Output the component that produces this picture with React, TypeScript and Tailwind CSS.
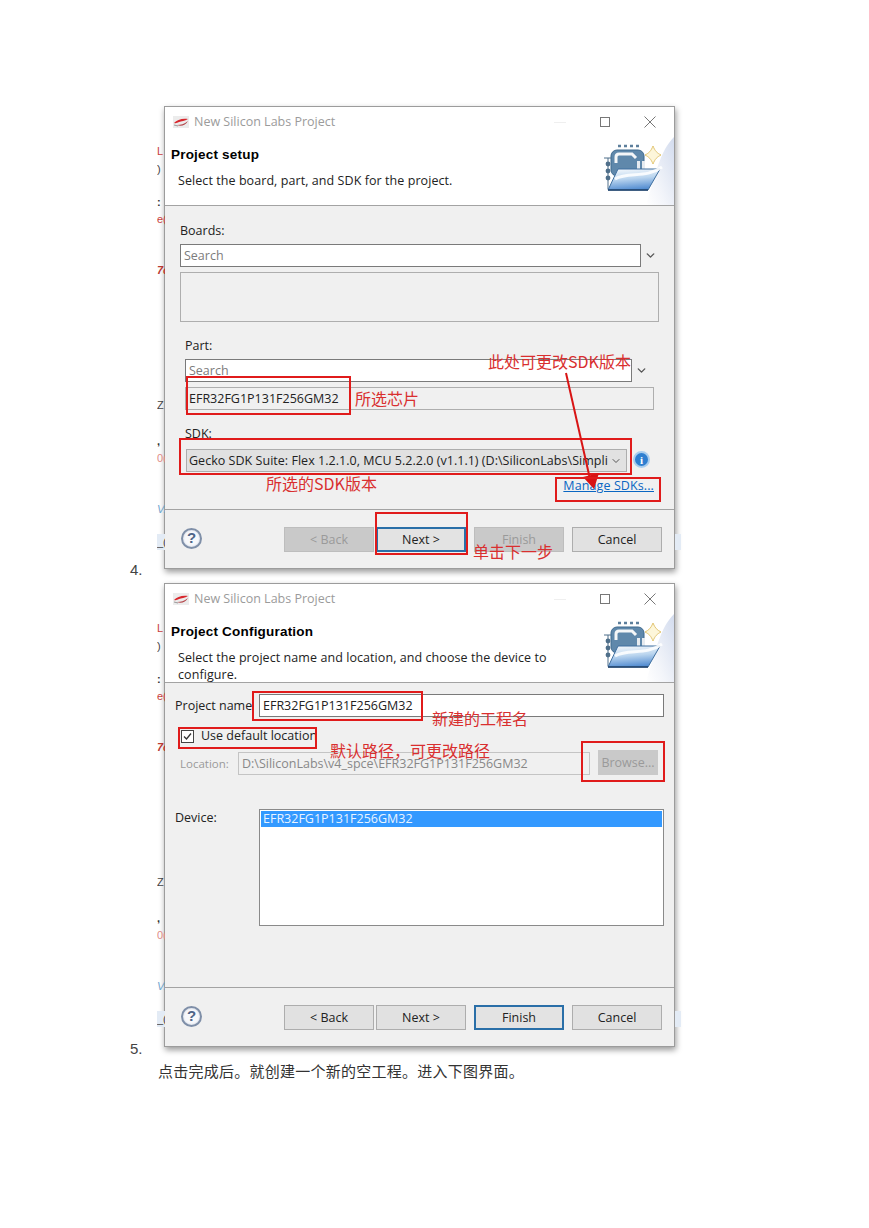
import type { ReactNode } from "react";
import { ChevronDown } from "lucide-react";

const ui = "font-['Open_Sans','Liberation_Sans',sans-serif] text-[12.5px] leading-[16px] text-[#222]";
const cjk = "font-['Noto_Sans_CJK_SC',sans-serif] text-[16px] text-[#d92f2f] leading-[20px] whitespace-nowrap";

function SiliconLogo() {
  return (
    <svg width="16" height="12" viewBox="0 0 16 12" className="shrink-0">
      <rect width="16" height="12" fill="#ececec" />
      <path d="M1 7 C4 4 9 2 15 3 C12 5 8 5 6 6 C4 7 3 7.5 1 7Z" fill="#d8262c" />
      <path d="M4 9 C8 9 11 8 15 5 C13 9 8 11 4 9Z" fill="#b3454a" />
      <path d="M1 9 L5 10" stroke="#9a9a9a" />
    </svg>
  );
}

function WizardArt() {
  return (
    <svg width="76" height="68" viewBox="0 0 76 68" className="absolute right-0 top-0">
      <defs>
        <linearGradient id="corner" x1="0" y1="1" x2="1" y2="0">
          <stop offset="0" stopColor="#ffffff" />
          <stop offset="0.35" stopColor="#f3f5fa" />
          <stop offset="1" stopColor="#d3dcee" />
        </linearGradient>
        <linearGradient id="folder" x1="0.3" y1="0" x2="0.5" y2="1">
          <stop offset="0" stopColor="#f1f6fb" />
          <stop offset="0.45" stopColor="#bcd6ef" />
          <stop offset="1" stopColor="#4f8ad0" />
        </linearGradient>
      </defs>
      <path d="M76 0 C62 14 58 36 48 68 L76 68Z" fill="url(#corner)" />
      <path d="M20 9 h3 M26 9 h3 M32 9 h3 M38 9 h3" stroke="#5d7f9c" strokeWidth="2.5" />
      <rect x="13" y="13" width="33" height="26" rx="6" fill="#5f88ab" stroke="#3f6a8f" />
      <path d="M18 26 V20 Q18 17 21 17 H34 L38 21" fill="none" stroke="#f4f6f8" strokeWidth="3" />
      <rect x="39" y="24" width="3" height="10" fill="#e6ebf0" />
      <rect x="44" y="24" width="3" height="10" fill="#e6ebf0" />
      <path d="M6 21 H13 M10 21 V52" fill="none" stroke="#4f6f8a" />
      <circle cx="10" cy="27" r="2.4" fill="#4f6f8a" />
      <circle cx="10" cy="34" r="2.4" fill="#4f6f8a" />
      <circle cx="10" cy="41" r="2.4" fill="#4f6f8a" />
      <path d="M10 53 L20 32 H62 L50 53Z" fill="url(#folder)" stroke="#3f6f9f" strokeWidth="1" />
      <path d="M10 53 H50" stroke="#1f4068" strokeWidth="1.6" />
      <path d="M17 42 C30 34 48 42 64 30" fill="none" stroke="#ffffff" strokeWidth="3" opacity="0.85" />
      <path d="M55 9 C57 14 59 16 63 18 C59 20 57 22 55 27 C53 22 51 20 47 18 C51 16 53 14 55 9Z" fill="#fdf6da" stroke="#e2c572" />
    </svg>
  );
}

function HelpIcon() {
  return (
    <div className="-mt-[2px] w-[21px] h-[21px] rounded-full border-2 border-[#7f8fa8] bg-[#f7f8fb] flex items-center justify-center font-['Liberation_Sans',sans-serif] font-bold text-[15px] text-[#4d6487] shadow-[inset_0_0_2px_#b8c3d6]">
      ?
    </div>
  );
}

function Btn({ label, state }: { label: string; state?: "off" | "focus" }) {
  const tone =
    state === "off"
      ? "bg-[#c9c9c9] border-[#bdbdbd] text-[#9a9a9a]"
      : state === "focus"
        ? "bg-[#e3e3e3] border-2 border-[#2a6fa8] text-[#222]"
        : "bg-[#e1e1e1] border-[#adadad] text-[#222]";
  return (
    <div className={`w-[90px] h-[25px] pt-[1px] border flex items-center justify-center ${tone}`}>{label}</div>
  );
}

function Scraps() {
  return (
    <div className="absolute left-[-8px] top-0 w-[8px] h-full overflow-hidden font-['Liberation_Sans',sans-serif] text-[11px] leading-[12px]">
      <span className="absolute top-[38px] left-0 text-[#c8403c]">L</span>
      <span className="absolute top-[56px] left-0 text-[#444]">)</span>
      <span className="absolute top-[89px] left-0 font-bold text-[#333]">:</span>
      <span className="absolute top-[106px] left-0 text-[#c8403c] whitespace-nowrap">e(</span>
      <span className="absolute top-[157px] left-0 italic font-bold text-[#b83a34]">7c</span>
      <span className="absolute top-[292px] left-0 text-[#444]">Z</span>
      <span className="absolute top-[328px] left-0 font-bold text-[#333]">,</span>
      <span className="absolute top-[345px] left-0 text-[#e08a86] whitespace-nowrap">0(</span>
      <span className="absolute top-[396px] left-0 italic text-[#6fa5cf]">V/</span>
      <div className="absolute top-[427px] left-0 w-full h-[16px] bg-[#e3ebf5]" />
      <span className="absolute top-[429px] left-0 text-[#444]">_(</span>
    </div>
  );
}

function Dialog({
  title,
  desc,
  bodyH,
  footer,
  children,
}: {
  title: string;
  desc: ReactNode;
  bodyH: string;
  footer: ReactNode;
  children: ReactNode;
}) {
  return (
    <div className={`relative w-[511px] border border-[#9c9c9c] bg-[#f0f0f0] shadow-[1px_3px_6px_rgba(0,0,0,0.4)] ${ui}`}>
      <Scraps />
      <div className="absolute right-[-7px] top-[427px] w-[6px] h-[16px] bg-[#e3ebf5]" />
      <div className="h-[30px] bg-white flex items-center pl-[8px] pr-[18px]">
        <SiliconLogo />
        <span className="ml-[5px] text-[#9b9b9b]">New Silicon Labs Project</span>
        <svg width="12" height="12" viewBox="0 0 12 12" className="ml-auto">
          <path d="M0 6.5 H12" stroke="#efefef" />
        </svg>
        <svg width="10" height="10" viewBox="0 0 10 10" className="ml-[34px]">
          <rect x="0.5" y="0.5" width="9" height="9" fill="none" stroke="#777" />
        </svg>
        <svg width="12" height="12" viewBox="0 0 12 12" className="ml-[34px]">
          <path d="M0.5 0.5 L11.5 11.5 M11.5 0.5 L0.5 11.5" stroke="#777" />
        </svg>
      </div>
      <div className="relative h-[68px] bg-white border-b border-[#a3a3a3] box-content">
        <WizardArt />
        <div className="pl-[6px] pt-[10px] font-['Liberation_Sans',sans-serif] font-bold text-[13.5px] leading-[16px] text-black tracking-[0.2px]">
          {title}
        </div>
        <div className="pl-[13px] pt-[9px] pr-[60px] leading-[17px] tracking-[0.07px]">{desc}</div>
      </div>
      <div className={`${bodyH} relative`}>{children}</div>
      <div className="h-[59px] border-t border-[#a3a3a3] flex items-center pl-[16px] pr-[12px]">
        <HelpIcon />
        <div className="ml-auto flex items-center">{footer}</div>
      </div>
    </div>
  );
}

function Mark({ className }: { className: string }) {
  return <div className={`absolute border-2 border-[#e01b1b] ${className}`} />;
}

function Note({ className, children }: { className: string; children: ReactNode }) {
  return <div className={`absolute ${cjk} ${className}`}>{children}</div>;
}

function SetupBody() {
  return (
    <div className="px-[15px] flex flex-col">
      <div className="mt-[17px]">Boards:</div>
      <div className="mt-[5px] flex items-center">
        <div className="w-[461px] h-[23px] bg-white border border-[#7a7a7a] flex items-center pl-[3px] text-[#7c7c7c]">Search</div>
        <ChevronDown className="ml-[3px] w-[13px] h-[13px] text-[#555]" strokeWidth={2.5} />
      </div>
      <div className="mt-[5px] w-[479px] h-[50px] border border-[#aeaeae]" />
      <div className="mt-[16px] ml-[5px]">Part:</div>
      <div className="mt-[5px] ml-[5px] flex items-center">
        <div className="w-[447px] h-[23px] bg-white border border-[#7a7a7a] flex items-center pl-[3px] text-[#7c7c7c]">Search</div>
        <ChevronDown className="ml-[3px] w-[13px] h-[13px] text-[#555]" strokeWidth={2.5} />
      </div>
      <div className="mt-[5px] ml-[5px] w-[469px] h-[23px] border border-[#aeaeae] flex items-center pl-[3px]">EFR32FG1P131F256GM32</div>
      <div className="mt-[16px] ml-[5px]">SDK:</div>
      <div className="mt-[7px] ml-[6px] flex items-center">
        <div className="w-[441px] h-[23px] bg-[#e1e1e1] border border-[#adadad] flex items-center pl-[2px] pr-[4px] whitespace-nowrap overflow-hidden tracking-[0.03px]">
          <span className="overflow-hidden flex-1">Gecko SDK Suite: Flex 1.2.1.0, MCU 5.2.2.0 (v1.1.1) (D:\SiliconLabs\Simpli</span>
          <ChevronDown className="ml-[2px] shrink-0 w-[12px] h-[12px] text-[#555]" />
        </div>
        <div className="ml-[6px] -mt-[2px] w-[17px] h-[17px] rounded-full bg-[#2f7fd0] border-2 border-[#a9cdee] flex items-center justify-center font-['Liberation_Serif',serif] font-bold text-[11px] text-white">i</div>
      </div>
      <div className="mt-[6px] self-end mr-[5px] text-[#0a66c2] underline tracking-[0.1px]">Manage SDKs...</div>
    </div>
  );
}

function ConfigBody() {
  return (
    <div className="px-[10px] flex flex-col">
      <div className="mt-[11px] flex items-center">
        <div className="w-[84px]">Project name</div>
        <div className="w-[405px] h-[23px] bg-white border border-[#7a7a7a] flex items-center pl-[3px]">EFR32FG1P131F256GM32</div>
      </div>
      <div className="mt-[11px] ml-[6px] flex items-center">
        <div className="w-[13px] h-[13px] border border-[#444] bg-white flex items-center justify-center">
          <svg width="11" height="11" viewBox="0 0 11 11">
            <path d="M2 5.5 L4.5 8 L9 2.5" fill="none" stroke="#333" strokeWidth="1.3" />
          </svg>
        </div>
        <span className="ml-[7px]">Use default location</span>
      </div>
      <div className="mt-[8px] ml-[5px] flex items-center text-[#9a9a9a]">
        <span className="w-[58px] text-[11.5px]">Location:</span>
        <div className="w-[352px] h-[23px] border border-[#c4c4c4] flex items-center pl-[3px] text-[#888]">D:\SiliconLabs\v4_spce\EFR32FG1P131F256GM32</div>
        <div className="ml-[8px] -mt-[2px] w-[60px] h-[25px] bg-[#c9c9c9] flex items-center justify-center">Browse...</div>
      </div>
      <div className="mt-[34px] flex items-start">
        <div className="w-[84px] pt-[1px]">Device:</div>
        <div className="w-[405px] h-[117px] bg-white border border-[#8a8a8a] p-[1px]">
          <div className="h-[16px] bg-[#3399ff] text-[#eaf4ff] flex items-center pl-[2px]">EFR32FG1P131F256GM32</div>
        </div>
      </div>
    </div>
  );
}

function Arrow() {
  return (
    <svg width="60" height="130" viewBox="0 0 60 130" className="absolute left-[395px] top-[261px]">
      <path d="M7 6 L31 112" stroke="#d81414" strokeWidth="2" fill="none" />
      <path d="M24 110 L40 106 L35 122Z" fill="#d81414" />
    </svg>
  );
}

export default function App() {
  return (
    <div className="w-[869px] h-[1228px] bg-white pt-[106px] pl-[130px] overflow-hidden">
      <div className="flex items-end">
        <div className="w-[34px] -mb-[10px] font-['Liberation_Sans',sans-serif] text-[15px] leading-[18px] text-[#444]">4.</div>
        <div className="relative">
          <Dialog
            title="Project setup"
            desc="Select the board, part, and SDK for the project."
            bodyH="h-[303px]"
            footer={
              <>
                <Btn label="< Back" state="off" />
                <div className="ml-[2px]"><Btn label="Next >" state="focus" /></div>
                <div className="ml-[8px]"><Btn label="Finish" state="off" /></div>
                <div className="ml-[8px]"><Btn label="Cancel" /></div>
              </>
            }
          >
            <SetupBody />
          </Dialog>
          <Mark className="left-[22px] top-[270px] w-[165px] h-[39px]" />
          <Note className="left-[191px] top-[282px]">所选芯片</Note>
          <Mark className="left-[15px] top-[332px] w-[453px] h-[37px]" />
          <Note className="left-[102px] top-[367px]">所选的SDK版本</Note>
          <Note className="left-[324px] top-[245px]">此处可更改SDK版本</Note>
          <Arrow />
          <Mark className="left-[391px] top-[371px] w-[106px] h-[25px]" />
          <Mark className="left-[211px] top-[406px] w-[93px] h-[43px]" />
          <Note className="left-[309px] top-[435px]">单击下一步</Note>
        </div>
      </div>
      <div className="mt-[14px] flex items-end">
        <div className="w-[34px] -mb-[11px] font-['Liberation_Sans',sans-serif] text-[15px] leading-[18px] text-[#444]">5.</div>
        <div className="relative">
          <Dialog
            title="Project Configuration"
            desc={
              <>
                Select the project name and location, and choose the device to
                <br />
                configure.
              </>
            }
            bodyH="h-[304px]"
            footer={
              <>
                <Btn label="< Back" />
                <div className="ml-[2px]"><Btn label="Next >" /></div>
                <div className="ml-[8px]"><Btn label="Finish" state="focus" /></div>
                <div className="ml-[8px]"><Btn label="Cancel" /></div>
              </>
            }
          >
            <ConfigBody />
          </Dialog>
          <Mark className="left-[88px] top-[108px] w-[171px] h-[30px]" />
          <Note className="left-[268px] top-[125px]">新建的工程名</Note>
          <Mark className="left-[14px] top-[144px] w-[139px] h-[22px]" />
          <Note className="left-[166px] top-[157px]">默认路径，可更改路径</Note>
          <Mark className="left-[417px] top-[158px] w-[84px] h-[41px]" />
        </div>
      </div>
      <p className="mt-[14px] ml-[28px] font-['Noto_Sans_CJK_SC',sans-serif] text-[15px] leading-[20px] tracking-[0.25px] text-[#333]">
        点击完成后。就创建一个新的空工程。进入下图界面。
      </p>
    </div>
  );
}
